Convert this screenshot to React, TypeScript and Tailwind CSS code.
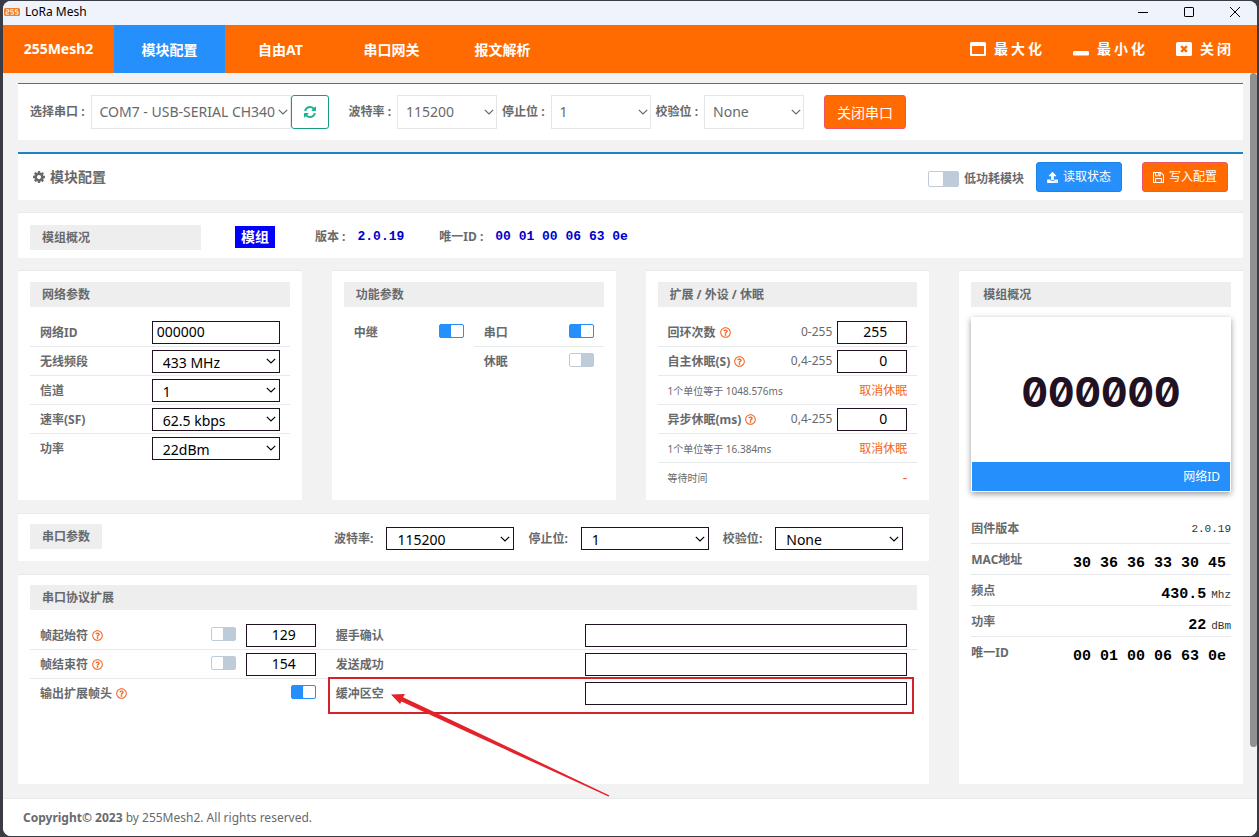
import type { ReactNode } from "react";
import { clsx } from "clsx";
import { FaRegQuestionCircle, FaUpload } from "react-icons/fa";

const tabs = ["模块配置", "自由AT", "串口网关", "报文解析"];

const networkSelects = [
  { id: "band", label: "无线频段", value: "433 MHz" },
  { id: "channel", label: "信道", value: "1" },
  { id: "rate", label: "速率(SF)", value: "62.5 kbps" },
  { id: "power", label: "功率", value: "22dBm" },
];

const portSelects = [
  { id: "port-baud", label: "波特率", value: "115200" },
  { id: "port-stop", label: "停止位", value: "1" },
  { id: "port-parity", label: "校验位", value: "None" },
];

const moduleInfo = [
  { label: "MAC地址", value: "30 36 36 33 30 45", unit: "" },
  { label: "频点", value: "430.5", unit: "Mhz" },
  { label: "功率", value: "22", unit: "dBm" },
  { label: "唯一ID", value: "00 01 00 06 63 0e", unit: "" },
];

function Chevron({ className }: { className: string }) {
  return (
    <svg viewBox="0 0 10 6" className={clsx("pointer-events-none absolute top-1/2 h-[6px] w-[10px] -translate-y-1/2", className)} aria-hidden="true">
      <path d="M.8.8 5 5 9.2.8" fill="none" stroke="currentColor" strokeWidth="1.2" />
    </svg>
  );
}

function Card({ className, children }: { className?: string; children: ReactNode }) {
  return <section className={clsx("border-t border-[#e7eaec] bg-white px-3", className)}>{children}</section>;
}

function CardTitle({ children, className }: { children: ReactNode; className?: string }) {
  return <h2 className={clsx("bg-[#eeeeee] px-3 pt-px text-xs leading-6 font-bold", className)}>{children}</h2>;
}

function Row({ children, last, className }: { children?: ReactNode; last?: boolean; className?: string }) {
  return (
    <div className={clsx("flex h-[29px] items-center border-b px-[10px]", last ? "border-transparent" : "border-[#e7eaec]", className)}>
      {children}
    </div>
  );
}

function FieldLabel({ id, help, children }: { id: string; help?: boolean; children: ReactNode }) {
  return (
    <label htmlFor={id} className="flex flex-1 items-center gap-1 pt-px text-xs font-bold whitespace-nowrap">
      {children}
      {help && <FaRegQuestionCircle className="size-[11px] text-[#f26522]" />}
    </label>
  );
}

function Toggle({ id, on, large }: { id: string; on?: boolean; large?: boolean }) {
  return (
    <input
      id={id}
      type="checkbox"
      defaultChecked={on}
      className={clsx(
        "flex shrink-0 appearance-none rounded-[2px] border border-[#bfcbd9] bg-[#bfcbd9] before:block before:h-full before:w-1/2 before:rounded-[1px] before:bg-white checked:justify-end checked:border-[#258ffb] checked:bg-[#258ffb]",
        large ? "h-4 w-[31px]" : "mb-[3px] h-[14px] w-[25px]"
      )}
    />
  );
}

function BoxSelect({ id, value }: { id: string; value: string }) {
  return (
    <span className="relative block w-32 text-black">
      <select id={id} defaultValue={value} className="block h-[23px] w-full appearance-none border border-[#221122] bg-white pt-[2px] pl-[10px] text-sm leading-5">
        <option>{value}</option>
      </select>
      <Chevron className="right-1" />
    </span>
  );
}

function NumberBox({ id, value, label }: { id: string; value: string; label?: string }) {
  return (
    <input
      id={id}
      aria-label={label}
      defaultValue={value}
      className="h-[23px] w-[70px] border border-[#221122] bg-white pr-[19px] pb-px text-right text-sm leading-5 text-black"
    />
  );
}

function TopSelect({ id, label, value, width }: { id: string; label: string; value: string; width: string }) {
  return (
    <div className="flex items-center gap-[6px]">
      <label htmlFor={id} className="text-xs font-bold whitespace-nowrap">
        {label} :
      </label>
      <span className={clsx("relative block", width)}>
        <select id={id} defaultValue={value} className="block h-[34px] w-full appearance-none border border-[#e5e6e7] bg-white pl-2 text-sm">
          <option>{value}</option>
        </select>
        <Chevron className="right-[3px]" />
      </span>
    </div>
  );
}

function TitleBar() {
  return (
    <div className="flex h-6 items-center bg-[#eff3fb] pr-[17px] pb-[2px] pl-px text-black">
      <svg viewBox="0 0 16 8" className="h-2 w-4" aria-hidden="true">
        <rect width="16" height="8" rx="1.5" fill="#f07f2a" />
        <path
          d="M2 1.8h2.6v2.2H2v2.2h2.8M9.3 1.8H6.7v2h2.6v2.4H6.500M14 1.800h-2.700v2H14v2.400h-2.800"
          fill="none"
          stroke="#fff"
          strokeWidth=".9"
        />
      </svg>
      <span className="ml-[5px] flex-1 text-xs">LoRa Mesh</span>
      <div className="flex gap-9">
        <button aria-label="Minimize" className="size-[10px]">
          <svg viewBox="0 0 10 10" className="size-[10px]"><path d="M0 5.500h10" stroke="#000" /></svg>
        </button>
        <button aria-label="Maximize" className="size-[10px]">
          <svg viewBox="0 0 10 10" className="size-[10px]"><rect x=".5" y=".5" width="9" height="9" rx=".6" fill="none" stroke="#000" /></svg>
        </button>
        <button aria-label="Close" className="size-[10px]">
          <svg viewBox="0 0 10 10" className="size-[10px]"><path d="m0 0 10 10M10 0 0 10" stroke="#000" /></svg>
        </button>
      </div>
    </div>
  );
}

function NavBar() {
  return (
    <nav className="flex h-12 items-stretch bg-[#ff6b00] text-sm font-bold text-white">
      <span className="flex w-[111px] items-center justify-center">255Mesh2</span>
      {tabs.map((tab, i) => (
        <button key={tab} className={clsx("w-[111px] pt-[2px]", i === 0 && "bg-[#258ffb]")}>
          {tab}
        </button>
      ))}
      <div className="ml-auto flex gap-7 pr-[23px] tracking-[3px]">
        <button className="flex items-center gap-2">
          <svg viewBox="0 0 16 14" className="h-[14px] w-4" aria-hidden="true">
            <path fillRule="evenodd" fill="#fff" d="M1.500 0h13A1.500 1.500 0 0 1 16 1.500v11a1.500 1.500 0 0 1-1.500 1.500h-13A1.500 1.500 0 0 1 0 12.500v-11A1.500 1.500 0 0 1 1.500 0ZM2 4v8h12V4Z" />
          </svg>
          最大化
        </button>
        <button className="flex items-center gap-2">
          <svg viewBox="0 0 16 14" className="h-[14px] w-4" aria-hidden="true">
            <rect y="9" width="16" height="4.500" rx="1.200" fill="#fff" />
          </svg>
          最小化
        </button>
        <button className="flex items-center gap-2">
          <svg viewBox="0 0 16 14" className="h-[14px] w-4" aria-hidden="true">
            <rect width="16" height="14" rx="1.500" fill="#fff" />
            <path d="m5.200 4.200 5.600 5.600m0-5.600-5.600 5.600" stroke="#ff6b00" strokeWidth="2.400" />
          </svg>
          关闭
        </button>
      </div>
    </nav>
  );
}

function RefreshIcon() {
  return (
    <svg viewBox="0 0 1536 1536" className="size-3 fill-[#1ab394]" aria-hidden="true">
      <path d="M1511 928q0 5-1 7-64 268-268 434.500t-478 166.500q-146 0-282.500-55t-243.500-157l-129 129q-19 19-45 19t-45-19-19-45v-448q0-26 19-45t45-19h448q26 0 45 19t19 45-19 45l-137 137q71 66 161 102t187 36q134 0 250-65t186-179q11-17 53-117 8-23 30-23h192q13 0 22.500 9.500t9.500 22.500zm25-800v448q0 26-19 45t-45 19h-448q-26 0-45-19t-19-45 19-45l138-138q-148-137-349-137-134 0-250 65t-186 179q-11 17-53 117-8 23-30 23h-199q-13 0-22.500-9.500t-9.500-22.500v-7q65-268 270-434.500t480-166.500q146 0 284 55.500t245 156.500l130-129q19-19 45-19t45 19 19 45z" />
    </svg>
  );
}

function CogIcon() {
  return (
    <svg viewBox="128 128 1536 1536" className="size-3 fill-current" aria-hidden="true">
      <path d="M1152 896q0-106-75-181t-181-75-181 75-75 181 75 181 181 75 181-75 75-181zm512-109v222q0 12-8 23t-20 13l-185 28q-19 54-39 91 35 50 107 138 10 12 10 25t-9 23q-27 37-99 108t-94 71q-12 0-26-9l-138-108q-44 23-91 38-16 136-29 186-7 28-36 28h-222q-14 0-24.500-8.500t-11.500-21.500l-28-184q-49-16-90-37l-141 107q-10 9-25 9-14 0-25-11-126-114-165-168-7-10-7-23 0-12 8-23 15-21 51-66.500t54-70.500q-27-50-41-99l-183-27q-13-2-21-12.500t-8-23.500v-222q0-12 8-23t19-13l186-28q14-46 39-92-40-57-107-138-10-12-10-24 0-10 9-23 26-36 98.500-107.500t94.500-71.500q13 0 26 10l138 107q44-23 91-38 16-136 29-186 7-28 36-28h222q14 0 24.500 8.500t11.500 21.500l28 184q49 16 90 37l142-107q9-9 24-9 13 0 25 10 129 119 165 170 7 8 7 22 0 12-8 23-15 21-51 66.500t-54 70.500q26 50 41 98l183 28q13 2 21 12.500t8 23.500z" />
    </svg>
  );
}

function FloppyIcon() {
  return (
    <svg viewBox="0 0 12 12" className="size-[11px] fill-none stroke-white" strokeWidth="1.1" strokeLinejoin="round" aria-hidden="true">
      <path d="M.6.6h8l2.800 2.800v8H.6ZM2.800.6v3.600h5V.6M2.800 11.400V7.200h6.400v4.200M6.300 1v2.200" />
    </svg>
  );
}

function NetworkCard() {
  return (
    <Card className="min-h-[230px] pt-[11px]">
      <CardTitle className="mb-[11px]">网络参数</CardTitle>
      <Row>
        <FieldLabel id="net-id">网络ID</FieldLabel>
        <input id="net-id" defaultValue="000000" className="h-[23px] w-32 border border-[#221122] pb-px pl-1 text-sm leading-5 text-black" />
      </Row>
      {networkSelects.map((field, i) => (
        <Row key={field.id} last={i === networkSelects.length - 1}>
          <FieldLabel id={field.id}>{field.label}</FieldLabel>
          <BoxSelect id={field.id} value={field.value} />
        </Row>
      ))}
    </Card>
  );
}

function FunctionCard() {
  return (
    <Card className="min-h-[230px] pt-[11px]">
      <CardTitle className="mb-[11px]">功能参数</CardTitle>
      <div className="grid grid-cols-2">
        <Row last>
          <FieldLabel id="relay">中继</FieldLabel>
          <Toggle id="relay" on />
        </Row>
        <Row>
          <FieldLabel id="serial">串口</FieldLabel>
          <Toggle id="serial" on />
        </Row>
        <Row last className="col-start-2">
          <FieldLabel id="sleep">休眠</FieldLabel>
          <Toggle id="sleep" />
        </Row>
      </div>
    </Card>
  );
}

function ExtensionCard() {
  return (
    <Card className="min-h-[230px] pt-[11px]">
      <CardTitle className="mb-[11px]">扩展 / 外设 / 休眠</CardTitle>
      <Row>
        <FieldLabel id="loop" help>回环次数</FieldLabel>
        <span className="mr-[5px] text-xs">0-255</span>
        <NumberBox id="loop" value="255" />
      </Row>
      <Row>
        <FieldLabel id="self-sleep" help>自主休眠(S)</FieldLabel>
        <span className="mr-[5px] text-xs">0,4-255</span>
        <NumberBox id="self-sleep" value="0" />
      </Row>
      <Row className="justify-between pt-[2px]">
        <span className="text-[10px]">1个单位等于 1048.576ms</span>
        <button className="text-xs text-[#f26522]">取消休眠</button>
      </Row>
      <Row>
        <FieldLabel id="async-sleep" help>异步休眠(ms)</FieldLabel>
        <span className="mr-[5px] text-xs">0,4-255</span>
        <NumberBox id="async-sleep" value="0" />
      </Row>
      <Row className="justify-between pt-[2px]">
        <span className="text-[10px]">1个单位等于 16.384ms</span>
        <button className="text-xs text-[#f26522]">取消休眠</button>
      </Row>
      <Row last className="justify-between pt-[2px]">
        <span className="text-[10px]">等待时间</span>
        <span className="text-sm text-[#f26522]">-</span>
      </Row>
    </Card>
  );
}

function PortCard() {
  return (
    <Card className="flex h-12 items-start pt-[10px]">
      <CardTitle>串口参数</CardTitle>
      <div className="mt-[3px] ml-auto flex gap-[14px] pr-[14px]">
        {portSelects.map((field) => (
          <div key={field.id} className="flex items-center gap-[13px]">
            <label htmlFor={field.id} className="pt-px text-xs font-bold">{field.label}:</label>
            <BoxSelect id={field.id} value={field.value} />
          </div>
        ))}
      </div>
    </Card>
  );
}

function ReplyRow({ id, label, last }: { id: string; label: string; last?: boolean }) {
  return (
    <Row last={last}>
      <FieldLabel id={id}>{label}</FieldLabel>
      <input id={id} className="h-[23px] w-[322px] border border-[#221122] px-1 text-sm text-black" />
    </Row>
  );
}

function ProtocolCard() {
  return (
    <Card className="flex-1 pt-[10px]">
      <CardTitle className="mb-[11px]">串口协议扩展</CardTitle>
      <div className="grid grid-cols-3">
        <div>
          <Row>
            <FieldLabel id="frame-start" help>帧起始符</FieldLabel>
            <Toggle id="frame-start" />
            <span className="w-[10px]" />
            <NumberBox id="frame-start-value" label="帧起始符" value="129" />
          </Row>
          <Row>
            <FieldLabel id="frame-end" help>帧结束符</FieldLabel>
            <Toggle id="frame-end" />
            <span className="w-[10px]" />
            <NumberBox id="frame-end-value" label="帧结束符" value="154" />
          </Row>
          <Row last>
            <FieldLabel id="frame-head" help>输出扩展帧头</FieldLabel>
            <Toggle id="frame-head" on />
          </Row>
        </div>
        <div className="col-span-2">
          <ReplyRow id="handshake" label="握手确认" />
          <ReplyRow id="sent" label="发送成功" />
          <div className="relative">
            <ReplyRow id="buffer-empty" label="缓冲区空" last />
            {/* callout for the buffer-empty reply */}
            <div className="pointer-events-none absolute -top-[2px] right-[3px] left-[2px] h-[37px] border-2 border-[#d2232a]" />
            <svg viewBox="0 0 220 104" className="pointer-events-none absolute top-[14px] left-[65px] h-[104px] w-[220px]" aria-hidden="true">
              <path d="M0 1.500 14 1 12 4.200 75 34 218.500 102.500 217.500 103.500 74 38 10.500 8.500 9 11Z" fill="#e3222a" />
            </svg>
          </div>
        </div>
      </div>
    </Card>
  );
}

function ModuleCard() {
  return (
    <Card className="pt-[11px]">
      <CardTitle className="mb-[10px]">模组概况</CardTitle>
      <div className="mb-[21px] border border-white shadow-[0_2px_6px_rgba(0,0,0,0.4)]">
        <p className="pt-[52px] pb-12 text-center font-['Inter',sans-serif] text-[41px] leading-[44px] font-bold text-[#221122] tabular-nums slashed-zero">
          000000
        </p>
        <p className="bg-[#258ffb] px-[10px] pt-px text-right text-xs leading-7 text-white">网络ID</p>
      </div>
      <dl>
        <div className="flex h-[31px] items-center justify-between border-b border-[#e7eaec] pt-[2px]">
          <dt className="text-xs font-bold">固件版本</dt>
          <dd className="font-['Liberation_Mono',monospace] text-[11px] text-[#333333]">2.0.19</dd>
        </div>
        {moduleInfo.map((info) => (
          <div key={info.label} className="flex h-[31px] justify-between border-b border-[#e7eaec] last:border-transparent">
            <dt className="text-xs leading-[31px] font-bold">{info.label}</dt>
            <dd className="flex items-baseline gap-[5px] pt-1 font-['Liberation_Mono',monospace] text-[15px] leading-[31px] font-bold text-black">
              {info.value}
              <span className="text-[11px] font-normal text-[#333333]">{info.unit}</span>
            </dd>
          </div>
        ))}
      </dl>
    </Card>
  );
}

export default function App() {
  return (
    <div className="flex min-h-screen flex-col bg-[#3a3b45] pt-px pr-0.5 pb-px pl-[3px] font-['Noto_Sans','Noto_Sans_CJK_SC',sans-serif] text-[#676a6c]">
      <div className="flex flex-1 flex-col overflow-hidden rounded-lg bg-[#f2f2f2]">
        <TitleBar />
        <NavBar />
        <div className="flex flex-1">
          <main className="flex min-w-0 flex-1 flex-col gap-3 py-[10px] pr-[7px] pb-[14px] pl-[15px]">
            <section className="flex h-[57px] items-center gap-5 border-t border-[#2a7fa8] bg-white px-3">
              <div className="flex">
                <TopSelect id="com" label="选择串口" value="COM7 - USB-SERIAL CH340" width="w-[200px]" />
                <button aria-label="刷新" className="flex h-[34px] w-[38px] items-center justify-center rounded-[3px] border border-[#1a9c82]">
                  <RefreshIcon />
                </button>
              </div>
              <div className="flex gap-[5px]">
                <TopSelect id="baud" label="波特率" value="115200" width="w-[100px]" />
                <TopSelect id="stop" label="停止位" value="1" width="w-[100px]" />
                <TopSelect id="parity" label="校验位" value="None" width="w-[100px]" />
              </div>
              <button className="h-[34px] rounded-[3px] border border-[#ed5565] bg-[#ff6b00] px-3 pt-px text-sm text-white">关闭串口</button>
            </section>

            <section className="flex h-12 items-center border-t-2 border-[#1c84c6] bg-white px-[15px]">
              <h1 className="flex flex-1 items-center gap-[5px] text-sm font-bold">
                <CogIcon />
                模块配置
              </h1>
              <div className="mr-3 flex items-center gap-[5px] pt-1">
                <Toggle id="low-power" large />
                <label htmlFor="low-power" className="text-xs font-bold">低功耗模块</label>
              </div>
              <button className="mr-5 flex h-[30px] items-center gap-[5px] rounded-[3px] border border-[#1c84e0] bg-[#258ffb] px-[10px] text-xs text-white">
                <FaUpload className="size-[11px]" />
                读取状态
              </button>
              <button className="flex h-[30px] items-center gap-[5px] rounded-[3px] border border-[#ed5565] bg-[#ff6b00] px-[10px] text-xs text-white">
                <FloppyIcon />
                写入配置
              </button>
            </section>

            <Card className="flex h-[46px] items-center pt-[3px] text-xs font-bold">
              <CardTitle className="w-[171px]">模组概况</CardTitle>
              <span className="mr-10 ml-[34px] bg-[#0000ff] px-[6px] text-sm leading-[22px] text-white">模组</span>
              <span className="mr-3">版本 :</span>
              <span className="mr-[35px] font-['Liberation_Mono',monospace] text-[13px] text-[#0000cc]">2.0.19</span>
              <span className="mr-3">唯一ID :</span>
              <span className="font-['Liberation_Mono',monospace] text-[13px] text-[#0000cc]">00 01 00 06 63 0e</span>
            </Card>

            <div className="grid flex-1 grid-cols-4 gap-x-[30px]">
              <div className="col-span-3 flex flex-col gap-[13px]">
                <div className="grid grid-cols-3 gap-x-[30px]">
                  <NetworkCard />
                  <FunctionCard />
                  <ExtensionCard />
                </div>
                <PortCard />
                <ProtocolCard />
              </div>
              <ModuleCard />
            </div>
          </main>
          <div className="w-[7px]">
            <div className="h-[93%] rounded-full bg-[#919191]" />
          </div>
        </div>
        <footer className="border-t border-[#e7eaec] bg-white px-5 text-xs leading-[37px]">
          <strong>Copyright© 2023</strong> by 255Mesh2. All rights reserved.
        </footer>
      </div>
    </div>
  );
}
